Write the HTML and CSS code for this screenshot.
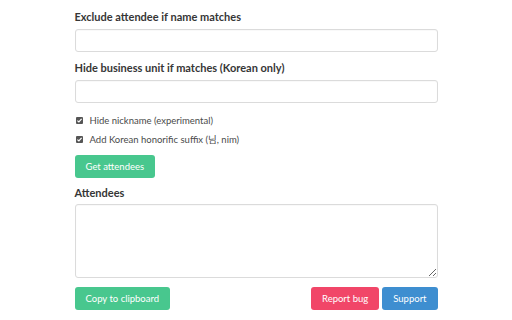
FILE: index.html
```html
<!DOCTYPE html>
<html lang="en">
<head>
    <meta charset="UTF-8">
    <title>Attendees</title>
    <link rel="stylesheet" href="styles.css">
</head>
<body>
    <div class="container">
        <!-- filters -->
        <div class="field">
            <label class="label">Exclude attendee if name matches</label>
            <input class="input" type="text">
        </div>
        <div class="field">
            <label class="label">Hide business unit if matches (Korean only)</label>
            <input class="input" type="text">
        </div>

        <div class="checks">
            <label class="check">
                <svg class="box" width="7" height="7" viewBox="0 0 7 7"><rect width="7" height="7" rx="1" fill="#555"/><polyline points="1.4,3.6 2.9,5 5.6,1.9" fill="none" stroke="#fff" stroke-width="1.2"/></svg>
                Hide nickname (experimental)
            </label>
            <label class="check">
                <svg class="box" width="7" height="7" viewBox="0 0 7 7"><rect width="7" height="7" rx="1" fill="#555"/><polyline points="1.4,3.6 2.9,5 5.6,1.9" fill="none" stroke="#fff" stroke-width="1.2"/></svg>
                Add Korean honorific suffix (님, nim)
            </label>
        </div>

        <div class="row">
            <button class="btn green">Get attendees</button>
        </div>

        <!-- result -->
        <div class="field result">
            <label class="label">Attendees</label>
            <textarea class="textarea"></textarea>
        </div>

        <div class="row actions">
            <button class="btn green">Copy to clipboard</button>
            <div class="right">
                <button class="btn red">Report bug</button>
                <button class="btn blue">Support</button>
            </div>
        </div>
    </div>
</body>
</html>
```

FILE: styles.css
```css
body {
    margin: 0;
    background: #fff;
    font-family: Lato, 'Noto Sans CJK KR', sans-serif;
    font-size: 9.5px;
    color: #4a4a4a;
}

.container {
    width: 363px;
    margin: 0 auto;
    padding-top: 10px;
    display: flex;
    flex-direction: column;
}

.field {
    display: flex;
    flex-direction: column;
    margin-bottom: 9px;
}

.label {
    font-size: 11px;
    font-weight: 700;
    color: #363636;
    line-height: 13px;
    margin-bottom: 6px;
}

.input,
.textarea {
    box-sizing: border-box;
    border: 1px solid #dbdbdb;
    border-radius: 3px;
    box-shadow: inset 0 0.5px 1px rgba(10,10,10,0.05);
    background: #fff;
    font: inherit;
    margin: 0;
}

.input {
    height: 23px;
}

.textarea {
    height: 74px;
    resize: vertical;
}

.checks {
    display: flex;
    flex-direction: column;
    gap: 6px;
    margin-top: 2px;
}

.check {
    display: flex;
    align-items: center;
    gap: 7px;
    line-height: 13px;
    padding-left: 1px;
}

.box {
    flex: none;
}

.row {
    display: flex;
    margin-top: 9px;
}

.result {
    margin-top: 8px;
    margin-bottom: 9px;
}

.result .label {
    margin-bottom: 5px;
}

.actions {
    margin-top: 0;
    justify-content: space-between;
}

.right {
    display: flex;
    gap: 3px;
}

.btn {
    height: 23px;
    padding: 0 10px;
    border: 1px solid transparent;
    border-radius: 3px;
    color: #fff;
    font: inherit;
    cursor: pointer;
}

.green { background: #48c78e; }
.red { background: #f14668; }
.blue { background: #3e8ed0; }
```
